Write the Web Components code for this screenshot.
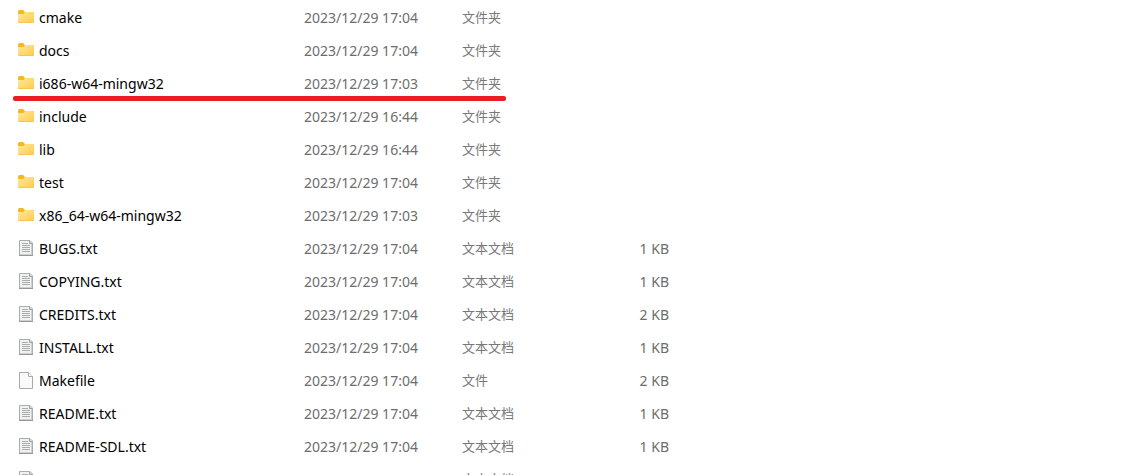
<!DOCTYPE html>
<html lang="zh-CN">
<head>
<meta charset="utf-8">
<title>文件夹</title>
<style>
body { margin: 0; background: #fff; font-family: "Noto Sans", "Noto Sans CJK SC", sans-serif; }
</style>
</head>
<body>
<file-list></file-list>

<template id="folder-art">
<style>:host { display: block; width: 18px; height: 18px; } svg { display: block; }</style>
<svg width="18" height="18" viewBox="0 0 18 18" aria-hidden="true">
<defs><linearGradient id="g" x1="0" y1="0" x2="1" y2="1"><stop offset="0" stop-color="#ffe9a2"/><stop offset="1" stop-color="#ffcb45"/></linearGradient></defs>
<path d="M1 3Q1 1 2.500 1H6L8 3H16Q17 3 17 4V7H1Z" fill="#f5b81f"/>
<path d="M1 5H6.500L8 3H16Q17 3 17 4V13Q17 14 16 14H2Q1 14 1 13Z" fill="url(#g)"/>
<path d="M1.500 13.500H16.500" stroke="#f3c458" stroke-width="1"/>
</svg>
</template>

<template id="text-art">
<style>:host { display: block; width: 18px; height: 18px; } svg { display: block; }</style>
<svg width="18" height="18" viewBox="0 0 18 18" aria-hidden="true">
<path d="M2.500 .5H13L15.500 3V15.500H2.500Z" fill="#f1f1f1" stroke="#acacac"/>
<path d="M12.500 .5V3.500H15.500" fill="#d5d5d5" stroke="#a0a0a0"/>
<path d="M14.500 4V15M3 14.500H15" fill="none" stroke="#d0d0d0"/>
<path d="M2 15.500H16" stroke="#969696"/>
<path d="M5 3.500H11M5 5.500H13M5 7.500H13M5 9.500H13M5 11.500H13" stroke="#a9adaf"/>
</svg>
</template>

<template id="blank-art">
<style>:host { display: block; width: 18px; height: 18px; } svg { display: block; }</style>
<svg width="18" height="18" viewBox="0 0 18 18" aria-hidden="true">
<path d="M2.500 .5H11.500L15.500 4.500V16.500H2.500Z" fill="#f9f9f9" stroke="#a9a9a9"/>
<path d="M11.500 .5V4.500H15.500" fill="#fff" stroke="#a9a9a9"/>
</svg>
</template>

<template id="mark-art">
<style>:host { display: block; height: 5px; border-radius: 2px; background: #ed1c24; }</style>
</template>

<template id="list-art">
<style>
:host { display: block; position: relative; height: 100vh; box-sizing: border-box; padding: 1px 0 0 17px; overflow: hidden; }
table { width: 652px; max-width: 100%; table-layout: fixed; border-collapse: collapse; font-size: 14px; line-height: 20px; color: #6d6d6d; }
col.name { width: 287px; }
col.date { width: 158px; }
col.type { width: 120px; }
tr { height: 33px; }
td { padding: 0; white-space: nowrap; vertical-align: middle; }
.entry { display: flex; align-items: center; gap: 4px; color: #000; }
td.type { padding-bottom: 2px; font-family: "Noto Sans CJK SC", sans-serif; font-size: 13px; color: #787878; }
.size { text-align: right; }
red-mark { position: absolute; left: 13px; top: 96px; width: 493px; }
</style>
<table>
<colgroup><col class="name"><col class="date"><col class="type"><col></colgroup>
<tbody></tbody>
</table>
<red-mark></red-mark>
</template>

<script>
function define(name, templateId) {
  customElements.define(name, class extends HTMLElement {
    constructor() {
      super();
      this.attachShadow({ mode: "open" }).append(document.getElementById(templateId).content.cloneNode(true));
    }
  });
}
define("folder-icon", "folder-art");
define("text-icon", "text-art");
define("blank-icon", "blank-art");
define("red-mark", "mark-art");

const files = [
  ["folder", "cmake", "2023/12/29 17:04"],
  ["folder", "docs", "2023/12/29 17:04"],
  ["folder", "i686-w64-mingw32", "2023/12/29 17:03"],
  ["folder", "include", "2023/12/29 16:44"],
  ["folder", "lib", "2023/12/29 16:44"],
  ["folder", "test", "2023/12/29 17:04"],
  ["folder", "x86_64-w64-mingw32", "2023/12/29 17:03"],
  ["text", "BUGS.txt", "2023/12/29 17:04", "1 KB"],
  ["text", "COPYING.txt", "2023/12/29 17:04", "1 KB"],
  ["text", "CREDITS.txt", "2023/12/29 17:04", "2 KB"],
  ["text", "INSTALL.txt", "2023/12/29 17:04", "1 KB"],
  ["blank", "Makefile", "2023/12/29 17:04", "2 KB"],
  ["text", "README.txt", "2023/12/29 17:04", "1 KB"],
  ["text", "README-SDL.txt", "2023/12/29 17:04", "1 KB"],
  ["text", "", ""]
];
const kinds = { folder: "文件夹", text: "文本文档", blank: "文件" };

customElements.define("file-list", class extends HTMLElement {
  constructor() {
    super();
    const root = this.attachShadow({ mode: "open" });
    root.append(document.getElementById("list-art").content.cloneNode(true));
    const body = root.querySelector("tbody");
    for (const [kind, name, date, size = ""] of files) {
      const row = body.insertRow();
      const entry = document.createElement("div");
      entry.className = "entry";
      const label = document.createElement("span");
      label.textContent = name;
      entry.append(document.createElement(kind + "-icon"), label);
      row.insertCell().append(entry);
      row.insertCell().textContent = date;
      const type = row.insertCell();
      type.className = "type";
      type.textContent = kinds[kind];
      const weight = row.insertCell();
      weight.className = "size";
      weight.textContent = size;
    }
  }
});
</script>
</body>
</html>
